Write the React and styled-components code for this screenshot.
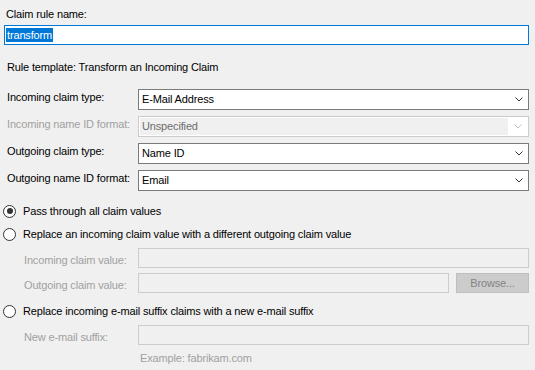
import React from 'react'
import styled, { createGlobalStyle } from 'styled-components'

const Global = createGlobalStyle`
    html, body {
        margin: 0;
        padding: 0;
        background: #f0f0f0;
    }
    body {
        font-family: "Liberation Sans", Arial, sans-serif;
        font-size: 11px;
        line-height: 13px;
        letter-spacing: -0.15px;
        color: #000;
    }
`;

const Dialog = styled.div`
    width: 535px;
    height: 370px;
    box-sizing: border-box;
    padding: 8px 6px 0 4px;
    display: flex;
    flex-direction: column;
    background: #f0f0f0;
    overflow: hidden;
`;

const Caption = styled.div`
    height: 13px;
    padding-left: ${p => p.indent || 2}px;
    margin-top: ${p => p.top || 0}px;
    color: ${p => p.muted ? '#a0a0a0' : '#000'};
`;

const NameInput = styled.div`
    margin-top: 4px;
    height: 20px;
    box-sizing: border-box;
    border: 1px solid #0078d7;
    background: #fff;
    display: flex;
    align-items: center;
    padding-left: 1px;
`;

const Selected = styled.span`
    background: #0078d7;
    color: #fff;
    height: 14px;
    line-height: 14px;
    padding: 0 1px;
`;

const Rows = styled.div`
    display: flex;
    flex-direction: column;
    gap: ${p => p.gap}px;
    margin-top: ${p => p.top}px;
    padding-left: ${p => p.indent || 0}px;
`;

const Row = styled.div`
    display: flex;
    align-items: flex-start;
`;

const FieldLabel = styled.div`
    width: ${p => p.width || 134}px;
    flex: none;
    box-sizing: border-box;
    padding-left: ${p => p.pad || 3}px;
    padding-top: ${p => p.offset || 2}px;
    color: ${p => p.disabled ? '#a0a0a0' : '#000'};
    white-space: nowrap;
`;

const Combo = styled.div`
    flex: 1;
    height: 21px;
    box-sizing: border-box;
    border: 1px solid ${p => p.disabled ? '#cccccc' : '#7a7a7a'};
    background: #fff;
    display: flex;
    align-items: center;
    padding: ${p => p.disabled ? '1px' : '0'};
`;

const ComboText = styled.div`
    flex: 1;
    height: 100%;
    display: flex;
    align-items: center;
    padding-left: ${p => p.disabled ? '2px' : '3px'};
    background: ${p => p.disabled ? '#f0f0f0' : 'transparent'};
    color: ${p => p.disabled ? '#6d6d6d' : '#000'};
`;

const ArrowBox = styled.div`
    width: 19px;
    flex: none;
    display: flex;
    justify-content: center;
    align-items: center;
`;

const TextBox = styled.div`
    flex: 1;
    height: 20px;
    box-sizing: border-box;
    border: 1px solid #cccccc;
    background: #f0f0f0;
`;

const BrowseButton = styled.div`
    width: 73px;
    height: 20px;
    margin-left: 7px;
    box-sizing: border-box;
    border: 1px solid #bfbfbf;
    background: #cccccc;
    color: #838383;
    display: flex;
    align-items: center;
    justify-content: center;
`;

const Radio = styled.div`
    display: flex;
    align-items: center;
    height: 14px;
    margin-top: ${p => p.top}px;
`;

const RadioCircle = styled.div`
    width: 13px;
    height: 13px;
    box-sizing: border-box;
    border: 1px solid #333;
    border-radius: 50%;
    background: #fff;
    margin-left: -1px;
    display: flex;
    align-items: center;
    justify-content: center;
    &::after {
        content: '';
        width: 6px;
        height: 6px;
        border-radius: 50%;
        background: ${p => p.checked ? '#333' : 'transparent'};
    }
`;

const RadioText = styled.div`
    margin-left: 7px;
    white-space: nowrap;
`;

function Chevron({ disabled }) {
    return (
        <svg width="8" height="5" viewBox="0 0 8 5">
            <path d="M0.5 0.5 L4 4 L7.5 0.5" fill="none" stroke={disabled ? '#bfbfbf' : '#333'} strokeWidth="1" />
        </svg>
    )
}

function ComboRow({ label, value, disabled }) {
    return (
        <Row>
            <FieldLabel disabled={disabled}>{label}</FieldLabel>
            <Combo disabled={disabled}>
                <ComboText disabled={disabled}>{value}</ComboText>
                <ArrowBox><Chevron disabled={disabled} /></ArrowBox>
            </Combo>
        </Row>
    )
}

export default function App() {
    return (
        <Dialog>
            <Global />
            <Caption>Claim rule name:</Caption>
            <NameInput>
                <Selected>transform</Selected>
            </NameInput>
            <Caption top={16} indent={3}>Rule template: Transform an Incoming Claim</Caption>

            <Rows gap={6} top={15}>
                <ComboRow label="Incoming claim type:" value="E-Mail Address" />
                <ComboRow label="Incoming name ID format:" value="Unspecified" disabled />
                <ComboRow label="Outgoing claim type:" value="Name ID" />
                <ComboRow label="Outgoing name ID format:" value="Email" />
            </Rows>

            <Radio top={13}>
                <RadioCircle checked />
                <RadioText>Pass through all claim values</RadioText>
            </Radio>
            <Radio top={9}>
                <RadioCircle />
                <RadioText>Replace an incoming claim value with a different outgoing claim value</RadioText>
            </Radio>

            <Rows gap={5} top={7}>
                <Row>
                    <FieldLabel disabled pad={20} offset={6}>Incoming claim value:</FieldLabel>
                    <TextBox />
                </Row>
                <Row>
                    <FieldLabel disabled pad={20} offset={6}>Outgoing claim value:</FieldLabel>
                    <TextBox />
                    <BrowseButton>Browse...</BrowseButton>
                </Row>
            </Rows>

            <Radio top={11}>
                <RadioCircle />
                <RadioText>Replace incoming e-mail suffix claims with a new e-mail suffix</RadioText>
            </Radio>

            <Rows gap={0} top={7}>
                <Row>
                    <FieldLabel disabled pad={20} offset={6}>New e-mail suffix:</FieldLabel>
                    <TextBox />
                </Row>
            </Rows>

            <Caption muted indent={136} top={7}>Example: fabrikam.com</Caption>
        </Dialog>
    )
}
